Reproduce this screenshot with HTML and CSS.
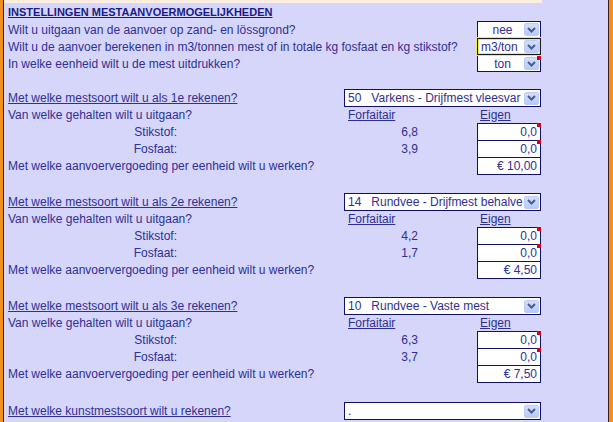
FILE: index.html
```html
<!DOCTYPE html>
<html>
<head>
<meta charset="utf-8" />
<title>Instellingen mestaanvoer</title>
<link rel="stylesheet" href="styles.css">
</head>
<body>
<div class="window">
<div class="sheet">
  <div class="strip"></div>
  <div class="content">

    <div class="row first"><span class="title">INSTELLINGEN MESTAANVOERMOGELIJKHEDEN</span></div>
    <div class="row">
      <span class="q">Wilt u uitgaan van de aanvoer op zand- en l&ouml;ssgrond?</span>
      <div class="combo center"><span class="val">nee</span><span class="btn"><svg width="9" height="6" viewBox="0 0 9 6"><path d="M1 1l3.5 3.5L8 1" fill="none" stroke="#4a5d8c" stroke-width="2"/></svg></span></div>
    </div>
    <div class="row">
      <span class="q">Wilt u de aanvoer berekenen in m3/tonnen mest of in totale kg fosfaat en kg stikstof?</span>
      <div class="combo active"><span class="val">m3/ton</span><span class="btn"><svg width="9" height="6" viewBox="0 0 9 6"><path d="M1 1l3.5 3.5L8 1" fill="none" stroke="#4a5d8c" stroke-width="2"/></svg></span></div>
    </div>
    <div class="row">
      <span class="q">In welke eenheid wilt u de mest uitdrukken?</span>
      <div class="combo center note"><span class="val">ton</span><span class="btn"><svg width="9" height="6" viewBox="0 0 9 6"><path d="M1 1l3.5 3.5L8 1" fill="none" stroke="#4a5d8c" stroke-width="2"/></svg></span></div>
    </div>

    <div class="row blank"></div>

    <div class="row">
      <span class="h">Met welke mestsoort wilt u als 1e rekenen?</span>
      <div class="combo long"><span class="val">50&nbsp;&nbsp;&nbsp;Varkens - Drijfmest vleesvar</span><span class="btn"><svg width="9" height="6" viewBox="0 0 9 6"><path d="M1 1l3.5 3.5L8 1" fill="none" stroke="#4a5d8c" stroke-width="2"/></svg></span></div>
    </div>
    <div class="row">
      <span class="lbl">Van welke gehalten wilt u uitgaan?</span>
      <span class="colhead">Forfaitair</span>
      <span class="colhead eigen">Eigen</span>
    </div>
    <div class="row">
      <span class="sub">Stikstof:</span>
      <span class="num">6,8</span>
      <div class="cell note">0,0</div>
    </div>
    <div class="row">
      <span class="sub">Fosfaat:</span>
      <span class="num">3,9</span>
      <div class="cell note">0,0</div>
    </div>
    <div class="row">
      <span class="l">Met welke aanvoervergoeding per eenheid wilt u werken?</span>
      <div class="cell">&euro; 10,00</div>
    </div>

    <div class="row blank tall"></div>

    <div class="row">
      <span class="h">Met welke mestsoort wilt u als 2e rekenen?</span>
      <div class="combo long"><span class="val">14&nbsp;&nbsp;&nbsp;Rundvee - Drijfmest behalve</span><span class="btn"><svg width="9" height="6" viewBox="0 0 9 6"><path d="M1 1l3.5 3.5L8 1" fill="none" stroke="#4a5d8c" stroke-width="2"/></svg></span></div>
    </div>
    <div class="row">
      <span class="lbl">Van welke gehalten wilt u uitgaan?</span>
      <span class="colhead">Forfaitair</span>
      <span class="colhead eigen">Eigen</span>
    </div>
    <div class="row">
      <span class="sub">Stikstof:</span>
      <span class="num">4,2</span>
      <div class="cell note">0,0</div>
    </div>
    <div class="row">
      <span class="sub">Fosfaat:</span>
      <span class="num">1,7</span>
      <div class="cell note">0,0</div>
    </div>
    <div class="row">
      <span class="l">Met welke aanvoervergoeding per eenheid wilt u werken?</span>
      <div class="cell">&euro; 4,50</div>
    </div>

    <div class="row blank tall"></div>

    <div class="row">
      <span class="h">Met welke mestsoort wilt u als 3e rekenen?</span>
      <div class="combo long"><span class="val">10&nbsp;&nbsp;&nbsp;Rundvee - Vaste mest</span><span class="btn"><svg width="9" height="6" viewBox="0 0 9 6"><path d="M1 1l3.5 3.5L8 1" fill="none" stroke="#4a5d8c" stroke-width="2"/></svg></span></div>
    </div>
    <div class="row">
      <span class="lbl">Van welke gehalten wilt u uitgaan?</span>
      <span class="colhead">Forfaitair</span>
      <span class="colhead eigen">Eigen</span>
    </div>
    <div class="row">
      <span class="sub">Stikstof:</span>
      <span class="num">6,3</span>
      <div class="cell note">0,0</div>
    </div>
    <div class="row">
      <span class="sub">Fosfaat:</span>
      <span class="num">3,7</span>
      <div class="cell note">0,0</div>
    </div>
    <div class="row">
      <span class="l">Met welke aanvoervergoeding per eenheid wilt u werken?</span>
      <div class="cell">&euro; 7,50</div>
    </div>

    <div class="row blank taller"></div>

    <div class="row">
      <span class="h">Met welke kunstmestsoort wilt u rekenen?</span>
      <div class="combo long"><span class="val">.</span><span class="btn"><svg width="9" height="6" viewBox="0 0 9 6"><path d="M1 1l3.5 3.5L8 1" fill="none" stroke="#4a5d8c" stroke-width="2"/></svg></span></div>
    </div>

  </div>
</div>
</div>
</body>
</html>
```

FILE: styles.css
```css
* {
  box-sizing: border-box;
}
body {
  margin: 0;
  font-family: 'Liberation Sans', Arial, sans-serif;
  font-size: 12px;
  color: #2f2f95;
  background-color: #d6d6fa;
}
.window {
  display: flex;
  height: 422px;
  overflow: hidden;
  border-left: 3px solid #f0901e;
  border-right: 4px solid #f0901e;
}
.sheet {
  flex: 1;
  background-color: #d6d6fa;
  border-left: 1px solid #3b1c14;
  border-right: 1px solid #3b1c14;
}
.strip {
  height: 3px;
  width: 538px;
  background-color: #fcefe2;
}
.content {
  padding-left: 4px;
}
.row {
  display: grid;
  grid-template-columns: 336px 74px 59px 64px;
  height: 17px;
  align-items: center;
  white-space: nowrap;
}
.row.first {
  height: 18px;
}
.row.blank.tall {
  height: 19px;
}
.row.blank.taller {
  height: 20px;
}
.title {
  grid-column: 1 / 5;
  font-size: 11px;
  font-weight: bold;
  text-decoration: underline;
  color: #1b1b85;
}
.q, .l {
  grid-column: 1 / 4;
}
.h {
  grid-column: 1;
  text-decoration: underline;
}
.lbl {
  grid-column: 1;
}
.sub {
  grid-column: 1;
  text-align: right;
  padding-right: 167px;
}
.colhead {
  grid-column: 2;
  padding-left: 4px;
  text-decoration: underline;
}
.colhead.eigen {
  grid-column: 4;
  padding-left: 3px;
}
.num {
  grid-column: 2;
  text-align: right;
}
.combo {
  grid-column: 4;
  position: relative;
  display: flex;
  align-items: center;
  height: 17px;
  background-color: #fff;
  border: 1px solid #10106a;
}
.combo.long {
  grid-column: 2 / 5;
  height: 18px;
}
.combo .val {
  flex: 1;
  overflow: hidden;
  padding-left: 3px;
}
.combo.center .val {
  text-align: center;
}
.combo.active {
  border-color: #1a1a1a;
  box-shadow: inset 0 0 0 1px #e9e86a, 0 0 0 1px #e9e86a;
  z-index: 1;
}
.btn {
  display: flex;
  align-items: center;
  justify-content: center;
  width: 15px;
  height: 13px;
  margin-right: 1px;
  border-radius: 2px;
  background: linear-gradient(#d2defd, #b9cbf6);
  border: 1px solid #bccdf4;
}
.cell {
  grid-column: 4;
  position: relative;
  height: 18px;
  line-height: 16px;
  padding-right: 3px;
  text-align: right;
  background-color: #fff;
  border: 1px solid #10106a;
}
.note::after {
  content: '';
  position: absolute;
  top: -1px;
  right: -1px;
  width: 4px;
  height: 4px;
  background-color: #d3001c;
}
.combo.note::after {
  top: 0;
  right: -1px;
  z-index: 2;
}
```
